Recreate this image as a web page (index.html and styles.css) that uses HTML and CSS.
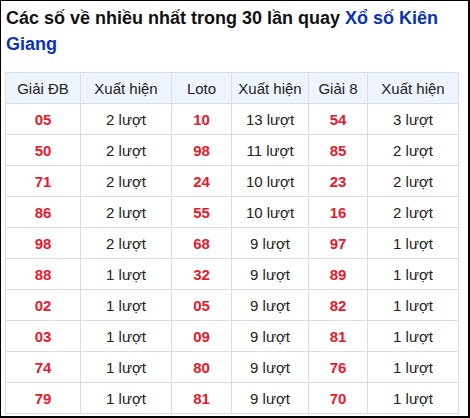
FILE: index.html
```html
<!DOCTYPE html>
<html lang="vi">
<head>
<meta charset="utf-8">
<link rel="stylesheet" href="styles.css">
</head>
<body>
<div class="box">
  <h2 class="title">Các số về nhiều nhất trong 30 lần quay <a class="link">Xổ số Kiên Giang</a></h2>
  <table class="stats">
    <colgroup>
      <col class="c1"><col class="c2"><col class="c3"><col class="c4"><col class="c5"><col class="c6">
    </colgroup>
    <thead>
      <tr><th>Giải ĐB</th><th>Xuất hiện</th><th>Loto</th><th>Xuất hiện</th><th>Giải 8</th><th>Xuất hiện</th></tr>
    </thead>
    <tbody>
      <tr><td class="n">05</td><td>2 lượt</td><td class="n">10</td><td>13 lượt</td><td class="n">54</td><td>3 lượt</td></tr>
      <tr><td class="n">50</td><td>2 lượt</td><td class="n">98</td><td>11 lượt</td><td class="n">85</td><td>2 lượt</td></tr>
      <tr><td class="n">71</td><td>2 lượt</td><td class="n">24</td><td>10 lượt</td><td class="n">23</td><td>2 lượt</td></tr>
      <tr><td class="n">86</td><td>2 lượt</td><td class="n">55</td><td>10 lượt</td><td class="n">16</td><td>2 lượt</td></tr>
      <tr><td class="n">98</td><td>2 lượt</td><td class="n">68</td><td>9 lượt</td><td class="n">97</td><td>1 lượt</td></tr>
      <tr><td class="n">88</td><td>1 lượt</td><td class="n">32</td><td>9 lượt</td><td class="n">89</td><td>1 lượt</td></tr>
      <tr><td class="n">02</td><td>1 lượt</td><td class="n">05</td><td>9 lượt</td><td class="n">82</td><td>1 lượt</td></tr>
      <tr><td class="n">03</td><td>1 lượt</td><td class="n">09</td><td>9 lượt</td><td class="n">81</td><td>1 lượt</td></tr>
      <tr><td class="n">74</td><td>1 lượt</td><td class="n">80</td><td>9 lượt</td><td class="n">76</td><td>1 lượt</td></tr>
      <tr><td class="n">79</td><td>1 lượt</td><td class="n">81</td><td>9 lượt</td><td class="n">70</td><td>1 lượt</td></tr>
    </tbody>
  </table>
</div>
</body>
</html>
```
FILE: styles.css
```css
html, body {
  margin: 0;
  padding: 0;
  background: #fff;
}
.box {
  box-sizing: border-box;
  width: 470px;
  height: 418px;
  border-style: solid;
  border-color: #000;
  border-width: 1px 2px 2px 1px;
  padding: 0 10px 0 4px;
  font-family: "Liberation Sans", Arial, sans-serif;
  color: #222;
}
.title {
  margin: 4px 0 0 1px;
  font-size: 18px;
  line-height: 26px;
  font-weight: bold;
  color: #111;
  height: 67px;
}
.link {
  color: #0b33b5;
  text-decoration: none;
}
.stats {
  border-collapse: collapse;
  width: 453px;
  table-layout: fixed;
  font-size: 15px;
}
.c1 { width: 75px; }
.c2 { width: 91px; }
.c3 { width: 60px; }
.c4 { width: 77px; }
.c5 { width: 59px; }
.c6 { width: 91px; }
.stats th, .stats td {
  border: 1px solid #dcdde3;
  height: 30px;
  padding: 0;
  text-align: center;
  vertical-align: middle;
}
.stats th {
  background: #edf4fd;
  font-weight: normal;
  color: #222;
}
.stats td.n {
  color: #e8192c;
  font-weight: bold;
}
```
